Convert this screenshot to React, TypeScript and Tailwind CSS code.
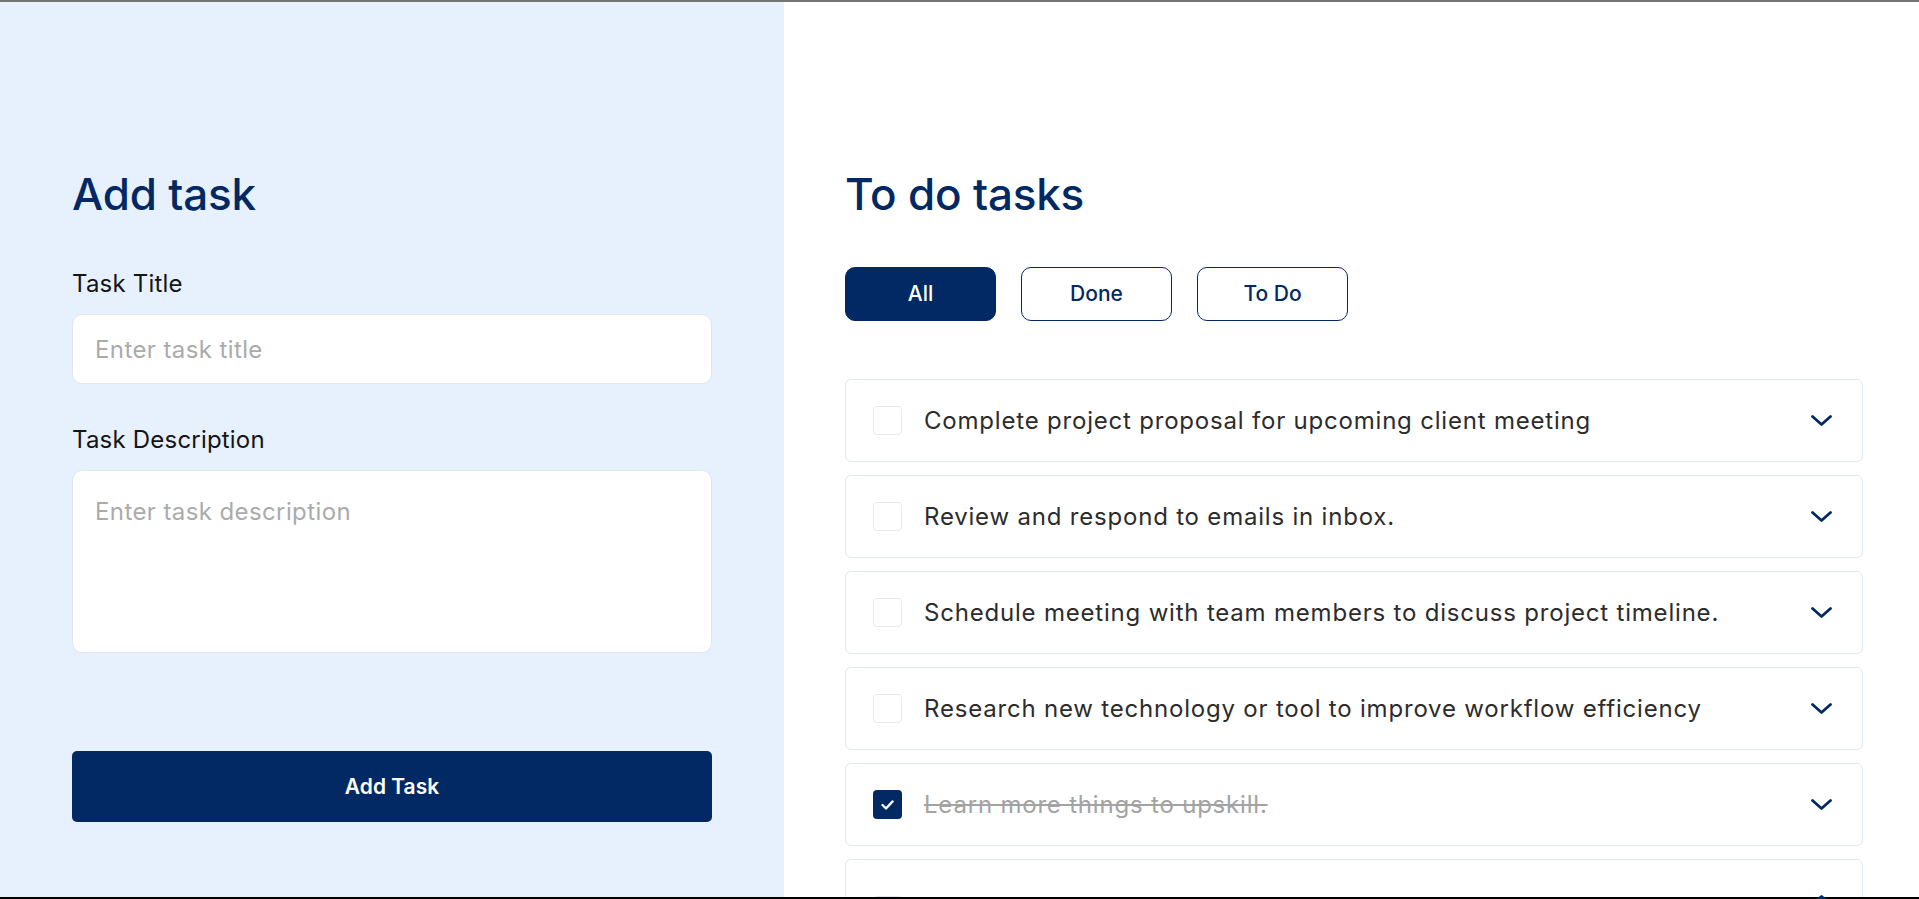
import { useState } from "react";

type Task = { id: number; title: string; done: boolean; open?: boolean };

const initialTasks: Task[] = [
  { id: 1, title: "Complete project proposal for upcoming client meeting", done: false },
  { id: 2, title: "Review and respond to emails in inbox.", done: false },
  { id: 3, title: "Schedule meeting with team members to discuss project timeline.", done: false },
  { id: 4, title: "Research new technology or tool to improve workflow efficiency", done: false },
  { id: 5, title: "Learn more things to upskill.", done: true },
  { id: 6, title: "Update the project board with latest status of the tasks", done: false, open: true },
];

function Chevron({ up }: { up?: boolean }) {
  return (
    <svg width="21" height="11" viewBox="0 0 21 11" fill="none" className={up ? "rotate-180" : ""}>
      <path d="M1.5 1.5L10.5 9.5L19.5 1.5" stroke="#022963" strokeWidth="2.8" strokeLinecap="round" strokeLinejoin="round" />
    </svg>
  );
}

function Checkbox({ checked }: { checked: boolean }) {
  if (checked) {
    return (
      <div className="w-[29px] h-[29px] shrink-0 rounded-[4px] bg-[#022963] flex items-center justify-center">
        <svg width="13" height="10" viewBox="0 0 13 10" fill="none">
          <path d="M1.5 5L5 8.5L11.5 1.5" stroke="white" strokeWidth="2.4" strokeLinecap="round" strokeLinejoin="round" />
        </svg>
      </div>
    );
  }
  return <div className="w-[29px] h-[29px] shrink-0 rounded-[4px] border border-[#E3E8F2] bg-white" />;
}

function TaskCard({ task }: { task: Task }) {
  return (
    <div className="rounded-[6px] border border-[#E2E7F4] bg-white">
      <div
        className={`flex justify-between pl-[27px] pr-[30px] ${
          task.open ? "items-start h-[81px] pt-[35px]" : "items-center h-[81px]"
        }`}
      >
        <div className="flex items-center gap-[22px]">
          <Checkbox checked={task.done} />
          <span
            className={`text-[24px] leading-[30px] tracking-[0.8px] ${
              task.done ? "text-[#A3A3A3] line-through" : "text-[#2C2C2C]"
            }`}
          >
            {task.title}
          </span>
        </div>
        <Chevron up={task.open} />
      </div>
      {task.open && (
        <div className="px-[78px] pb-[30px] text-[18px] text-[#6B7280]">
          Go through every open card and move it to the right column.
        </div>
      )}
    </div>
  );
}

export default function App() {
  const [filter, setFilter] = useState("All");
  const filters = ["All", "Done", "To Do"];

  return (
    <div className="h-[899px] w-full overflow-hidden flex flex-col bg-white font-['Inter',sans-serif]">
      <div className="h-[2px] shrink-0 bg-[#767374]" />
      <div className="flex flex-1 min-h-0">
        <aside className="w-[784px] shrink-0 bg-[#E7F1FD] px-[72px] pt-[166px]">
          <h1 className="text-[44px] leading-[52px] font-medium text-[#022963] tracking-[-0.2px]">Add task</h1>

          <label className="block mt-[48px] text-[24px] leading-[32px] tracking-[0.2px] text-[#151515]">
            Task Title
          </label>
          <input
            placeholder="Enter task title"
            className="mt-[14px] w-full h-[70px] rounded-[10px] border border-[#E1E5EC] bg-white px-[22px] text-[24px] tracking-[0.4px] placeholder:text-[#ABABAB] outline-none"
          />

          <label className="block mt-[40px] text-[24px] leading-[32px] tracking-[0.2px] text-[#151515]">
            Task Description
          </label>
          <textarea
            placeholder="Enter task description"
            className="mt-[14px] block w-full h-[183px] resize-none rounded-[10px] border border-[#E1E5EC] bg-white px-[22px] pt-[25px] text-[24px] leading-[32px] tracking-[0.4px] placeholder:text-[#ABABAB] outline-none"
          />

          <button className="mt-[98px] w-full h-[71px] rounded-[5px] bg-[#022963] text-white text-[21px] font-semibold">
            Add Task
          </button>
        </aside>

        <main className="flex-1 pl-[61px] pr-[56px] pt-[166px]">
          <h2 className="text-[44px] leading-[52px] font-medium text-[#022963] tracking-[-0.2px]">To do tasks</h2>

          <div className="mt-[47px] flex gap-[25px]">
            {filters.map((f) => (
              <button
                key={f}
                onClick={() => setFilter(f)}
                className={`w-[151px] h-[54px] rounded-[10px] border-[1.5px] border-[#022963] text-[21px] font-medium ${
                  filter === f ? "bg-[#022963] text-white" : "bg-white text-[#022963]"
                }`}
              >
                {f}
              </button>
            ))}
          </div>

          <div className="mt-[58px] flex flex-col gap-[13px]">
            {initialTasks.map((t) => (
              <TaskCard key={t.id} task={t} />
            ))}
          </div>
        </main>
      </div>
      <div className="h-[2px] shrink-0 bg-black" />
    </div>
  );
}
